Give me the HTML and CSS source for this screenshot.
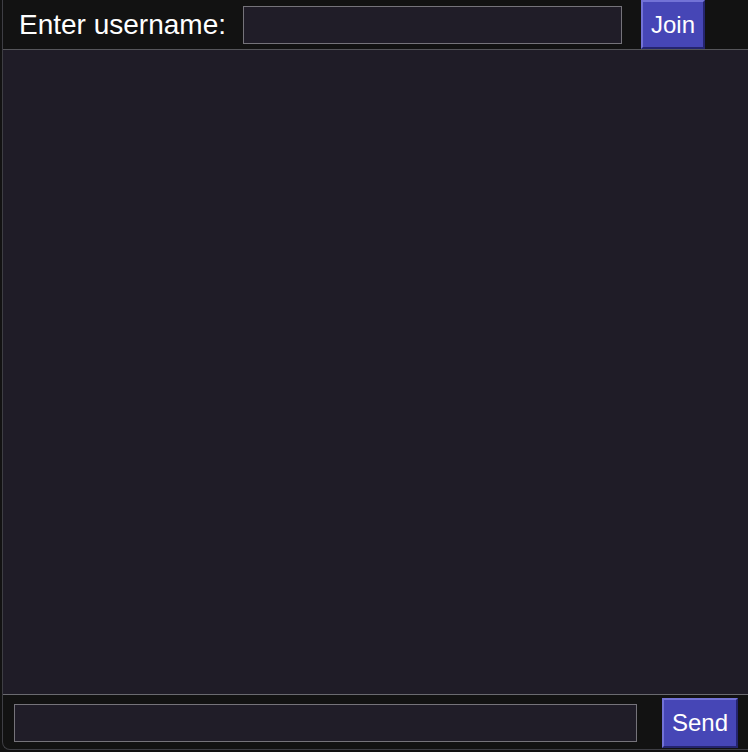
FILE: index.html
```html
<!DOCTYPE html>
<html>
<head>
<meta charset="utf-8">
<link rel="stylesheet" href="styles.css">
</head>
<body>
<div class="app">
  <div class="topbar">
    <label class="label" for="user">Enter username:</label>
    <input id="user" class="field user-field" type="text">
    <button class="btn join-btn">Join</button>
  </div>
  <div class="chat"></div>
  <div class="bottombar">
    <input class="field msg-field" type="text">
    <button class="btn send-btn">Send</button>
  </div>
</div>
</body>
</html>
```

FILE: styles.css
```css
html, body {
  margin: 0;
  padding: 0;
  background: #121212;
  width: 748px;
  height: 752px;
  overflow: hidden;
}
.app {
  margin-left: 2px;
  width: 746px;
  height: 750px;
  box-sizing: border-box;
  border-left: 1px solid #3e3e44;
  border-bottom: 1px solid #3e3e44;
  border-bottom-left-radius: 8px;
  background: #121212;
  display: flex;
  flex-direction: column;
  font-family: "Liberation Sans", Arial, sans-serif;
  color: #ffffff;
}
.topbar {
  height: 49px;
  display: flex;
  align-items: flex-start;
  flex: none;
}
.label {
  font-size: 28px;
  line-height: 28px;
  margin-top: 11px;
  margin-left: 16px;
  width: 224px;
  color: #ffffff;
}
.field {
  box-sizing: border-box;
  height: 38px;
  background: #201d28;
  border: 1px solid #75737a;
  margin: 0;
  padding: 0 6px;
  color: #fff;
  font-family: "Liberation Sans", Arial, sans-serif;
  font-size: 20px;
  outline: none;
}
.user-field {
  width: 379px;
  margin-top: 6px;
}
.btn {
  box-sizing: border-box;
  background: #4646b6;
  border-width: 2px;
  border-style: solid;
  border-color: #7272d6 #24246e #24246e #7272d6;
  color: #ffffff;
  font-family: "Liberation Sans", Arial, sans-serif;
  font-size: 24px;
  padding: 0;
  margin: 0;
}
.join-btn {
  width: 64px;
  height: 49px;
  margin-left: 19px;
}
.chat {
  flex: none;
  height: 646px;
  box-sizing: border-box;
  background: #1f1c27;
  border-top: 1px solid #55555a;
  border-bottom: 1px solid #6a6a70;
}
.bottombar {
  flex: 1;
  display: flex;
  align-items: flex-start;
}
.msg-field {
  width: 623px;
  margin-top: 9px;
  margin-left: 11px;
}
.send-btn {
  width: 76px;
  height: 50px;
  margin-top: 3px;
  margin-left: 25px;
}
```
